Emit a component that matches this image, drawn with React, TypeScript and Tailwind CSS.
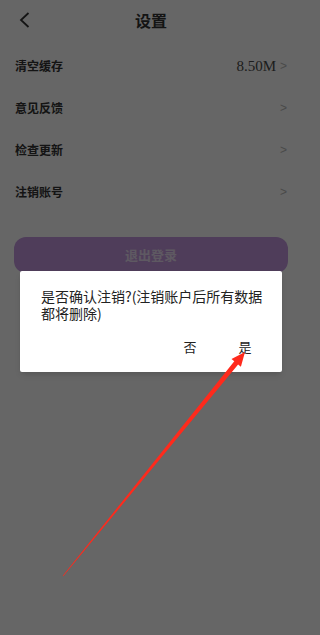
import React from 'react';

const rows = [
  { label: '清空缓存', value: '8.50M' },
  { label: '意见反馈' },
  { label: '检查更新' },
  { label: '注销账号' },
];

export default function App() {
  return (
    <div className="relative h-[635px] w-full overflow-hidden bg-white font-['Noto_Sans_CJK_SC','Noto_Sans',sans-serif]">
      {/* settings page */}
      <div className="w-[302px]">
        <div className="grid h-[40px] grid-cols-[48px_1fr_48px] items-center">
          <button className="flex h-full items-center pl-[19px]">
            <svg width="11" height="16" viewBox="0 0 11 16" fill="none">
              <polyline points="9.5,1 2,8 9.5,15" stroke="#333" strokeWidth="1.8" strokeLinejoin="miter" />
            </svg>
          </button>
          <h1 className="text-center text-[16px] font-bold text-[#333]">设置</h1>
          <div />
        </div>

        <div className="mt-[5px]">
          {rows.map((row) => (
            <div key={row.label} className="flex h-[42px] items-center justify-between px-[15px]">
              <span className="text-[12px] font-bold text-[#333]">{row.label}</span>
              <div className="flex items-center gap-[4px]">
                {row.value && (
                  <span className="font-['Liberation_Serif',serif] text-[15px] text-[#4a4a4a]">
                    {row.value}
                  </span>
                )}
                <span className="font-['Liberation_Sans',sans-serif] text-[12px] text-[#b8b8b8]">&gt;</span>
              </div>
            </div>
          ))}
        </div>

        <button className="mx-[14px] mt-[24px] flex h-[36px] w-[274px] items-center justify-center rounded-[12px] bg-[#c59ae0] text-[13px] font-bold text-white/70">
          退出登录
        </button>
      </div>

      {/* dim layer */}
      <div className="absolute inset-0 bg-black/60" />

      {/* confirm dialog */}
      <div className="absolute inset-0 pl-[20px] pt-[271px]">
        <div className="w-[262px] rounded-[2px] bg-white shadow-md">
          <p className="whitespace-nowrap pl-[21px] pt-[17px] text-[14px] leading-[17px] text-[#222]">
            是否确认注销?(注销账户后所有数据
            <br />
            都将删除)
          </p>
          <div className="mt-[13px] flex justify-end pb-[13px] pr-[17px]">
            <button className="h-[24px] w-[40px] text-[13px] text-[#222]">否</button>
            <button className="ml-[15px] h-[24px] w-[40px] text-[13px] text-[#222]">是</button>
          </div>
        </div>
      </div>

      {/* red annotation arrow */}
      <svg className="pointer-events-none absolute inset-0" width="297" height="635" viewBox="0 0 297 635">
        <polygon
          points="62.8,575.8 234.3,361.3 231.5,359.1 245,352 240.9,366.7 238.1,364.5 63.2,576.2"
          fill="#ff2a1c"
        />
      </svg>
    </div>
  );
}
